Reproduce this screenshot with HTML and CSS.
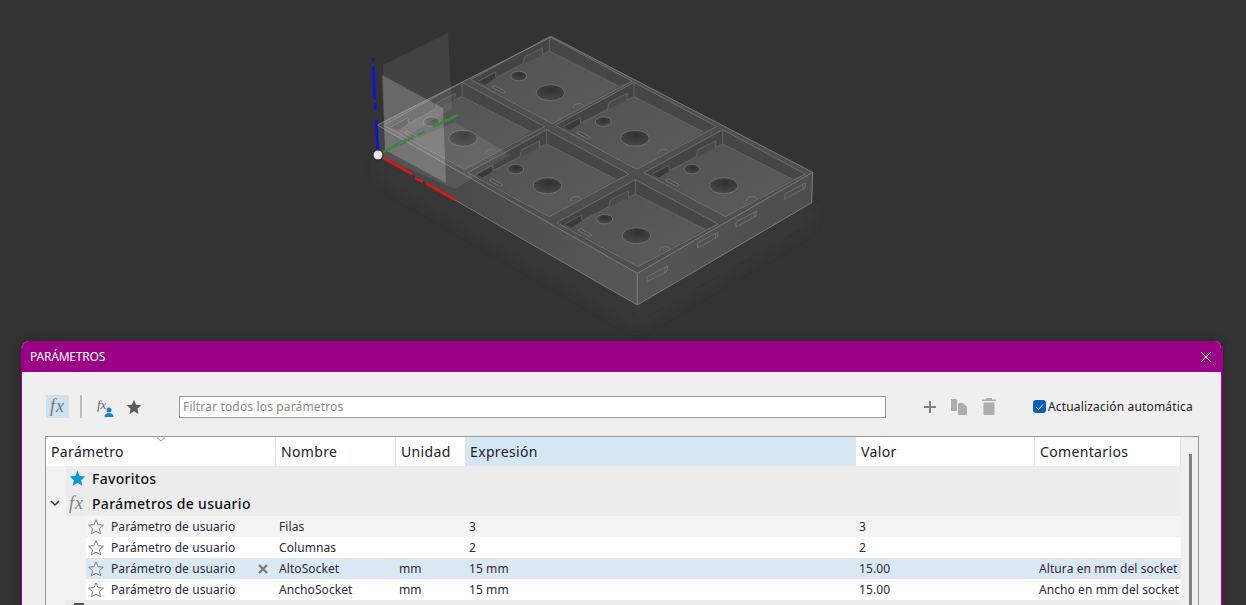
FILE: index.html
```html
<!DOCTYPE html>
<html lang="es">
<head>
  <meta charset="UTF-8" />
  <title>Parámetros</title>
  <link rel="stylesheet" href="styles.css">
</head>
<body>
  <div class="viewport">
    <svg class="model" width="1246" height="341" viewBox="0 0 1246 341" aria-label="Modelo 3D">
      <defs>
        <linearGradient id="sideLeft" x1="0" y1="0" x2="1" y2="0.2">
          <stop offset="0" stop-color="#424242"/>
          <stop offset="1" stop-color="#565656"/>
        </linearGradient>
        <linearGradient id="sideRight" x1="0" y1="0" x2="1" y2="0">
          <stop offset="0" stop-color="#555555"/>
          <stop offset="1" stop-color="#4d4d4d"/>
        </linearGradient>
        <linearGradient id="floorShade" x1="0" y1="0" x2="1" y2="1">
          <stop offset="0" stop-color="#525252"/>
          <stop offset="1" stop-color="#5c5c5c"/>
        </linearGradient>
        <radialGradient id="hole" cx="0.55" cy="0.3" r="0.8">
          <stop offset="0" stop-color="#303030"/>
          <stop offset="1" stop-color="#4c4c4c"/>
        </radialGradient>
        <filter id="soft" x="-10%" y="-10%" width="120%" height="120%">
          <feGaussianBlur stdDeviation="6"/>
        </filter>
        <g id="cell">
          <polygon class="rim" points="-80,-13 -1.3,-56 81.3,-11.7 1.4,31"/>
          <polygon class="wall-right" points="-1.3,-56 81.3,-11.7 68,-6.6 -1.3,-41.6"/>
          <polygon class="wall-left" points="-80,-13 -1.3,-56 -1.3,-41.6 -8.6,-38.3 -27.6,-29 -54.6,-15 -65.3,-8.3"/>
          <polygon class="floor" points="-1.3,-41.6 68,-6.6 1.4,31 -65.3,-8.3 -54.6,-15 -27.6,-29 -8.6,-38.3"/>
          <polygon class="step" points="-8.6,-38.3 -8,-45 -26.3,-35.7 -27.6,-29"/>
          <polygon class="slot-dark" points="-54.6,-15 -55.3,-20.6 -72,-11.6 -65.3,-8.3"/>
          <polygon class="notch" points="-58.6,-5.5 -56,-7 -45,-1 -47.5,0.5"/>
          <ellipse class="hole" cx="-32" cy="-16.6" rx="8" ry="4.8"/>
          <ellipse class="hole" cx="-0.3" cy="0" rx="14.3" ry="8"/>
          <path class="edge" d="M23,15.5 A5,3 0 0 1 33,13"/>
          <polyline class="edge" points="-80,-13 -1.3,-56 81.3,-11.7 1.4,31 -80,-13"/>
          <polyline class="edge edge-faint" points="-1.3,-56 -1.3,-41.6 68,-6.6"/>
          <polyline class="edge edge-faint" points="-1.3,-41.6 -8.6,-38.3 -8,-45 -26.3,-35.7 -27.6,-29 -54.6,-15 -55.3,-20.6 -72,-11.6"/>
        </g>
        <g id="slot">
          <polygon class="edge" points="0,8 20,-3 20.5,-8 0,3"/>
          <polyline class="edge" points="18,-2 18,-7"/>
        </g>
      </defs>

      <polygon class="ground" filter="url(#soft)" points="378,155 637,305 812,203 812,225 638,328 378,178"/>
      <g class="ghosts">
        <line x1="648" y1="316" x2="665" y2="307"/>
        <line x1="697" y1="288" x2="714" y2="279"/>
        <line x1="736" y1="266" x2="753" y2="257"/>
        <line x1="785" y1="239" x2="800" y2="230"/>
      </g>

      <polygon fill="#4e4e4e" points="377.3,125 551.7,36.7 812.7,172.3 637.3,273.3"/>
      <polygon fill="url(#sideLeft)" points="377.3,125 637.3,273.3 637.3,305 378,155"/>
      <polygon fill="url(#sideRight)" points="637.3,273.3 812.7,172.3 811.7,202.7 637.3,305"/>

      <use href="#cell" x="463.3" y="138.3"/>
      <use href="#cell" x="550.7" y="92.7"/>
      <use href="#cell" x="547.7" y="185.7"/>
      <use href="#cell" x="635.3" y="138.3"/>
      <use href="#cell" x="636.7" y="235.7"/>
      <use href="#cell" x="724" y="185.7"/>

      <polyline class="edge edge-outer" points="377.3,125 551.7,36.7 812.7,172.3 637.3,273.3 377.3,125"/>
      <polyline class="edge edge-outer" points="455,200 637.3,305 811.7,202.7 812.7,172.3"/>
      <line class="edge edge-outer" x1="637.3" y1="273.3" x2="637.3" y2="305"/>

      <use href="#slot" x="647" y="274"/>
      <use href="#slot" x="697.5" y="240"/>
      <use href="#slot" x="736" y="219"/>
      <use href="#slot" x="785" y="191"/>

      <polygon class="plane" points="378,155 455,122 511,155 455,189"/>
      <polygon class="plane" points="383,65 448,33 452,108 385,150"/>
      <polygon class="plane plane-front" points="382,75 443,108 446,183 385,150"/>

      <g class="axis axis-blue">
        <line x1="378" y1="150" x2="376" y2="120"/>
        <line x1="375.7" y1="110" x2="375" y2="103"/>
        <line x1="374.7" y1="100" x2="373.3" y2="66"/>
        <line x1="373" y1="61" x2="373" y2="58"/>
      </g>
      <g class="axis axis-red">
        <line x1="383" y1="158" x2="412" y2="174"/>
        <line x1="415" y1="178" x2="423" y2="182"/>
        <line x1="426" y1="183.500" x2="455" y2="200"/>
      </g>
      <g class="axis axis-green">
        <line x1="383" y1="152" x2="413" y2="137"/>
        <line x1="417" y1="135.500" x2="425" y2="131.500"/>
        <line x1="433" y1="127" x2="458" y2="115"/>
      </g>
      <circle cx="378" cy="155" r="5" fill="#e6e6e6" stroke="#222222" stroke-width="1"/>
    </svg>
  </div>

  <svg class="defs-only" width="0" height="0" aria-hidden="true">
    <defs>
      <path id="star" d="M8 .8l2.1 4.9 5.3.5-4 3.5 1.2 5.2L8 12.2l-4.6 2.7 1.2-5.2-4-3.500 5.300-.5z"/>
    </defs>
  </svg>

  <div class="dialog">
    <div class="titlebar">
      <span class="title">PARÁMETROS</span>
      <svg class="close" width="12" height="12" viewBox="0 0 12 12"><path d="M1 1l10 10M11 1L1 11"/></svg>
    </div>

    <div class="toolbar">
      <span class="fx-btn">fx</span>
      <span class="tool-sep"></span>
      <span class="fx-user">fx
        <svg width="10" height="10" viewBox="0 0 10 10" class="user-badge"><circle cx="5" cy="3" r="2.500"/><path d="M.5 10c0-3 2-4 4.500-4s4.500 1 4.500 4z"/></svg>
      </span>
      <svg class="star-solid" width="16" height="16" viewBox="0 0 16 16"><use href="#star"/></svg>
      <div class="filter">Filtrar todos los parámetros</div>
      <div class="actions">
        <svg width="14" height="14" viewBox="0 0 14 14" class="act-plus"><path d="M6 1h2v5h5v2H8v5H6V8H1V6h5z"/></svg>
        <svg width="17" height="17" viewBox="0 0 17 17" class="act-off"><path d="M0 1h5l1 1v11H0z"/><path d="M7 5h5l4 4v8H7z"/></svg>
        <svg width="14" height="17" viewBox="0 0 14 17" class="act-off"><path d="M4 0h6v1.500h4V3H0V1.500h4zM1.500 4.500h11V17h-11z"/></svg>
      </div>
      <label class="auto-update">
        <span class="checkbox"><svg width="9" height="8" viewBox="0 0 9 8"><path d="M1 4l2.500 2.500L8 1.500"/></svg></span>
        Actualización automática
      </label>
    </div>

    <div class="grid-wrap">
      <div class="grid-main">
        <div class="row head">
          <div class="sort-col">Parámetro
            <svg class="sort" width="10" height="5" viewBox="0 0 10 5"><path d="M1 .5l4 3.500 4-3.500"/></svg>
          </div>
          <div>Nombre</div>
          <div>Unidad</div>
          <div class="active">Expresión</div>
          <div>Valor</div>
          <div>Comentarios</div>
        </div>

        <div class="group">
          <svg class="star-blue" width="17" height="17" viewBox="0 0 16 16"><use href="#star"/></svg>
          <span>Favoritos</span>
        </div>
        <div class="group">
          <svg class="chevron" width="10" height="7" viewBox="0 0 10 7"><path d="M1 1l4 4 4-4"/></svg>
          <span class="fx-small">fx</span>
          <span>Parámetros de usuario</span>
        </div>

        <div class="row item alt">
          <div class="first"><svg class="star-line" width="16" height="16" viewBox="0 0 16 16"><use href="#star"/></svg>Parámetro de usuario</div>
          <div>Filas</div><div></div><div>3</div><div>3</div><div></div>
        </div>
        <div class="row item">
          <div class="first"><svg class="star-line" width="16" height="16" viewBox="0 0 16 16"><use href="#star"/></svg>Parámetro de usuario</div>
          <div>Columnas</div><div></div><div>2</div><div>2</div><div></div>
        </div>
        <div class="row item selected">
          <div class="first"><svg class="star-line" width="16" height="16" viewBox="0 0 16 16"><use href="#star"/></svg>Parámetro de usuario
            <svg class="remove" width="10" height="10" viewBox="0 0 10 10"><path d="M1 1l8 8M9 1l-8 8"/></svg>
          </div>
          <div>AltoSocket</div><div>mm</div><div>15 mm</div><div>15.00</div><div>Altura en mm del socket</div>
        </div>
        <div class="row item">
          <div class="first"><svg class="star-line" width="16" height="16" viewBox="0 0 16 16"><use href="#star"/></svg>Parámetro de usuario</div>
          <div>AnchoSocket</div><div>mm</div><div>15 mm</div><div>15.00</div><div>Ancho en mm del socket t</div>
        </div>
        <div class="group next"><span class="cut-icon"></span></div>
      </div>
      <div class="scrollbar"><span class="thumb"></span></div>
    </div>
  </div>
</body>
</html>
```

FILE: styles.css
```css
html, body {
  margin: 0;
  height: 605px;
  overflow: hidden;
}

body {
  background-color: #333333;
  font-family: "Noto Sans", Arial, sans-serif;
  color: #222222;
}

.viewport {
  height: 341px;
}

.model {
  display: block;
}

.defs-only {
  display: block;
  height: 0;
}

/* 3D model */
.ground { fill: #383838; }
.ghosts line { stroke: #2e2e2e; stroke-width: 3; opacity: 0.25; }
.rim { fill: #505050; }
.wall-right { fill: #464646; }
.wall-left { fill: #444444; }
.floor { fill: url(#floorShade); }
.step { fill: #4b4b4b; }
.slot-dark { fill: #3a3a3a; }
.hole { fill: url(#hole); stroke: #7d7d7d; stroke-width: 0.7; }
.notch { fill: #4a4a4a; stroke: #808080; stroke-width: 0.7; }
.edge { fill: none; stroke: #777777; stroke-width: 0.8; }
.edge-faint { stroke: #6a6a6a; }
.edge-outer { stroke: #8a8a8a; }
.plane { fill: #ffffff; fill-opacity: 0.08; }
.plane-front { fill-opacity: 0.2; }

.axis line { stroke-width: 2.5; }
.axis-blue line { stroke: #0a10f0; }
.axis-red line { stroke: #f01010; }
.axis-green line { stroke: #3a8a3a; }

/* dialog */
.dialog {
  box-sizing: border-box;
  width: 1202px;
  height: 264px;
  margin-left: 21px;
  background-color: #efefef;
  border: solid #9b0085;
  border-width: 0 2px 0 1px;
  border-radius: 8px 8px 0 0;
  box-shadow: 0 0 10px rgba(0, 0, 0, 0.3);
  overflow: hidden;
}

.titlebar {
  display: flex;
  align-items: center;
  justify-content: space-between;
  height: 31px;
  padding: 0 9px 0 8px;
  background-color: #9b0085;
  color: #ffffff;
}

.title {
  font-size: 12px;
  letter-spacing: -0.2px;
}

.close path {
  stroke: #ffffff;
  stroke-width: 1;
  fill: none;
}

.toolbar {
  display: flex;
  align-items: center;
  height: 23px;
  margin-top: 23px;
  padding-left: 24px;
}

.fx-btn {
  width: 23px;
  height: 23px;
  line-height: 22px;
  text-align: center;
  background-color: #cfe0f0;
  color: #777777;
  font-family: "Liberation Serif", serif;
  font-style: italic;
  font-size: 18px;
  letter-spacing: 1px;
}

.tool-sep {
  width: 2px;
  height: 23px;
  margin: 0 15px 0 11px;
  background-color: #bdbdbd;
}

.fx-user {
  position: relative;
  top: -2px;
  width: 19px;
  font-family: "Liberation Serif", serif;
  font-style: italic;
  font-size: 13px;
  line-height: 18px;
  color: #666666;
}

.user-badge {
  position: absolute;
  right: 2px;
  bottom: -3px;
  fill: #1a7fd0;
}

.star-solid {
  margin: 0 0 0 10px;
  fill: #5a5a5a;
}

.filter {
  box-sizing: border-box;
  width: 707px;
  height: 22px;
  margin-left: 37px;
  padding-left: 3px;
  border: 1px solid #999999;
  background-color: #ffffff;
  color: #8a8a8a;
  font-size: 12px;
  line-height: 20px;
  letter-spacing: 0.15px;
}

.actions {
  display: flex;
  align-items: center;
  gap: 14px;
  margin-left: 37px;
}

.act-plus { fill: #808080; }
.act-off { fill: #adadad; }

.auto-update {
  display: flex;
  align-items: center;
  gap: 2px;
  margin-left: 37px;
  font-size: 12px;
  letter-spacing: 0.17px;
  color: #222222;
}

.checkbox {
  display: flex;
  align-items: center;
  justify-content: center;
  width: 13px;
  height: 13px;
  border-radius: 3px;
  background-color: #0a5fb8;
}

.checkbox path {
  fill: none;
  stroke: #cfe3f7;
  stroke-width: 1;
}

.grid-wrap {
  display: flex;
  box-sizing: border-box;
  width: 1154px;
  height: 200px;
  margin: 18px 0 0 23px;
  border: 1px solid #999999;
  border-bottom: 0;
}

.grid-main {
  width: 1135px;
  background-color: #f2f2f2;
}

.scrollbar {
  flex: 1;
  padding: 17px 0 0 8px;
  background-color: #f0f0f0;
}

.thumb {
  display: block;
  width: 2.5px;
  height: 160px;
  background-color: #808080;
}

.row {
  display: grid;
  grid-template-columns: 230px 120px 69px 391px 179px 146px;
}

.head {
  height: 29px;
  background-color: #ffffff;
  font-size: 14px;
  line-height: 29px;
  letter-spacing: 0.35px;
}

.head > div {
  position: relative;
  box-sizing: border-box;
  padding-left: 5px;
  border-right: 1px solid #e4e4e4;
  color: #222222;
}

.head > div:nth-child(3) {
  border-right: 0;
}

.head > .active {
  background-color: #d5e6f5;
  border-right: 0;
}

.sort {
  position: absolute;
  left: 110px;
  top: 0;
  fill: none;
  stroke: #999999;
}

.group {
  display: flex;
  align-items: center;
  position: relative;
  height: 25px;
  margin-left: 20px;
  padding-left: 3px;
  background-color: #ececec;
  font-size: 14px;
  font-weight: 500;
  letter-spacing: 0.3px;
  color: #111111;
}

.star-blue {
  margin-right: 6px;
  fill: #0a9ad8;
}

.chevron {
  position: absolute;
  left: -16px;
  top: 9px;
  fill: none;
  stroke: #333333;
  stroke-width: 1.5;
}

.fx-small {
  width: 23px;
  font-family: "Liberation Serif", serif;
  font-style: italic;
  font-size: 18px;
  letter-spacing: 1px;
  color: #808080;
}

.item {
  height: 21px;
  margin-left: 40px;
  grid-template-columns: 189px 120px 70px 390px 180px 146px;
  background-color: #ffffff;
  font-size: 12px;
  line-height: 21px;
  letter-spacing: 0.08px;
  color: #2a2a3a;
}

.item > div {
  box-sizing: border-box;
  padding-left: 4px;
  white-space: nowrap;
  overflow: hidden;
}

.item > div:last-child {
  padding-right: 3px;
}

.alt { background-color: #f4f4f4; }
.selected { background-color: #dbe8f3; }

.item .first {
  display: flex;
  align-items: center;
  position: relative;
  padding-left: 2px;
}

.star-line {
  margin-right: 7px;
  flex: none;
  fill: none;
  stroke: #808080;
  stroke-width: 1;
}

.remove {
  position: absolute;
  right: 7px;
  top: 6px;
  fill: none;
  stroke: #777777;
  stroke-width: 2.2;
}

.group.next {
  height: 5px;
  overflow: hidden;
  align-items: flex-start;
}

.cut-icon {
  display: block;
  width: 10px;
  height: 2px;
  margin: 3px 0 0 5px;
  background-color: #555555;
}
```
